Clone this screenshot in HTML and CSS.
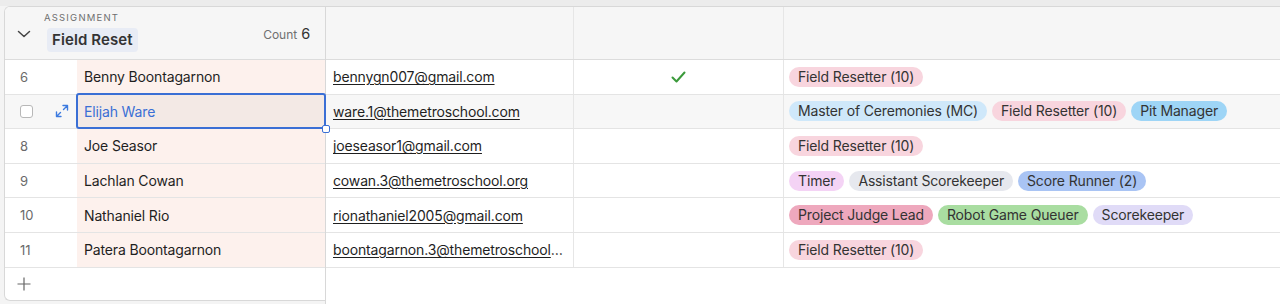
FILE: index.html
```html
<!DOCTYPE html>
<html>
<head>
  <meta charset="UTF-8">
  <title>Assignments</title>
  <link rel="stylesheet" href="styles.css">
</head>
<body>
  <div class="topbar"></div>
  <div class="sheet">
    <div class="frozen">
      <div class="group-head">
        <svg class="chevron" width="14" height="8" viewBox="0 0 14 8"><path d="M1.5 1.5 L7 6.5 L12.5 1.5" fill="none" stroke="#444" stroke-width="1.5" stroke-linecap="round" stroke-linejoin="round"/></svg>
        <div class="group-title">
          <div class="group-label">ASSIGNMENT</div>
          <span class="group-pill">Field Reset</span>
        </div>
        <div class="count"><span class="count-label">Count</span> 6</div>
      </div>

      <div class="frow">
        <div class="num">6</div>
        <div class="name">Benny Boontagarnon</div>
      </div>
      <div class="frow hover">
        <div class="num">
          <span class="checkbox"></span>
          <svg class="expand" width="14" height="14" viewBox="0 0 14 14"><path d="M8 1.5 H12.5 V6 M12.5 1.5 L8.5 5.5 M6 12.5 H1.5 V8 M1.5 12.5 L5.5 8.5" fill="none" stroke="#3d7be0" stroke-width="1.4" stroke-linecap="round" stroke-linejoin="round"/></svg>
        </div>
        <div class="name selected">Elijah Ware<span class="handle"></span></div>
      </div>
      <div class="frow">
        <div class="num">8</div>
        <div class="name">Joe Seasor</div>
      </div>
      <div class="frow">
        <div class="num">9</div>
        <div class="name">Lachlan Cowan</div>
      </div>
      <div class="frow">
        <div class="num">10</div>
        <div class="name">Nathaniel Rio</div>
      </div>
      <div class="frow">
        <div class="num">11</div>
        <div class="name">Patera Boontagarnon</div>
      </div>
      <div class="add-row">
        <svg width="14" height="14" viewBox="0 0 14 14"><path d="M7 0.5 V13.5 M0.5 7 H13.5" stroke="#666" stroke-width="1.2"/></svg>
      </div>
    </div>

    <div class="grid">
      <div class="grid-head">
        <div class="cell email"></div>
        <div class="cell check"></div>
        <div class="cell tags"></div>
      </div>

      <div class="grow">
        <div class="cell email"><a href="#">bennygn007@gmail.com</a></div>
        <div class="cell check">
          <svg width="15" height="12" viewBox="0 0 15 12"><path d="M1.5 6.5 L5.5 10.5 L13.5 1.5" fill="none" stroke="#3b9a3b" stroke-width="2" stroke-linecap="round" stroke-linejoin="round"/></svg>
        </div>
        <div class="cell tags"><span class="tag pink">Field Resetter (10)</span></div>
      </div>
      <div class="grow hover">
        <div class="cell email"><a href="#">ware.1@themetroschool.com</a></div>
        <div class="cell check"></div>
        <div class="cell tags">
          <span class="tag sky">Master of Ceremonies (MC)</span>
          <span class="tag pink">Field Resetter (10)</span>
          <span class="tag blue">Pit Manager</span>
        </div>
      </div>
      <div class="grow">
        <div class="cell email"><a href="#">joeseasor1@gmail.com</a></div>
        <div class="cell check"></div>
        <div class="cell tags"><span class="tag pink">Field Resetter (10)</span></div>
      </div>
      <div class="grow">
        <div class="cell email"><a href="#">cowan.3@themetroschool.org</a></div>
        <div class="cell check"></div>
        <div class="cell tags">
          <span class="tag lilac">Timer</span>
          <span class="tag grey">Assistant Scorekeeper</span>
          <span class="tag cobalt">Score Runner (2)</span>
        </div>
      </div>
      <div class="grow">
        <div class="cell email"><a href="#">rionathaniel2005@gmail.com</a></div>
        <div class="cell check"></div>
        <div class="cell tags">
          <span class="tag rose">Project Judge Lead</span>
          <span class="tag green">Robot Game Queuer</span>
          <span class="tag lavender">Scorekeeper</span>
        </div>
      </div>
      <div class="grow">
        <div class="cell email"><a href="#">boontagarnon.3@themetroschool.org</a></div>
        <div class="cell check"></div>
        <div class="cell tags"><span class="tag pink">Field Resetter (10)</span></div>
      </div>
    </div>
  </div>
</body>
</html>
```

FILE: styles.css
```css
body {
  margin: 0;
  background-color: #f4f4f4;
  font-family: Inter, "Liberation Sans", sans-serif;
  font-size: 14px;
  letter-spacing: -0.15px;
  color: #1f1f1f;
}
.topbar {
  height: 6px;
  background-color: #ececec;
}
.sheet {
  display: flex;
  height: 298px;
}
.frozen {
  width: 320px;
  height: 293px;
  margin-left: 4px;
  background-color: #fff;
  border: 1px solid #d8d8d8;
  border-right: none;
  border-radius: 6px 0 0 6px;
}
.grid {
  flex: 1;
  background-color: #fff;
  border-top: 1px solid #d8d8d8;
  border-left: 1px solid #d8d8d8;
}
.group-head, .grid-head {
  height: 52px;
  background-color: #f6f6f6;
  border-bottom: 1px solid #dcdcdc;
}
.group-head {
  display: flex;
  align-items: center;
  padding: 0 15px 0 12px;
  border-radius: 5px 0 0 0;
}
.chevron {
  margin-right: 13px;
  margin-top: 1px;
}
.group-title {
  flex: 1;
  display: flex;
  flex-direction: column;
  align-items: flex-start;
  gap: 4px;
}
.group-label {
  font-size: 9.5px;
  letter-spacing: 1.2px;
  color: #6f6f6f;
  line-height: 12px;
  margin-top: -2px;
}
.group-pill {
  background-color: #e8ecf5;
  border-radius: 4px;
  padding: 0 5px;
  margin-left: 3px;
  line-height: 24px;
  font-size: 15px;
  letter-spacing: 0.1px;
  font-weight: 600;
  color: #333;
}
.count {
  font-size: 14.5px;
  color: #333;
  margin-top: 1px;
}
.count-label {
  font-size: 12px;
  letter-spacing: 0;
  color: #707070;
}
.frow, .grow {
  display: flex;
  height: 33.6px;
  border-bottom: 1px solid #e4e4e4;
}
.hover {
  background-color: #f7f7f7;
}
.num {
  width: 72px;
  display: flex;
  align-items: center;
  padding-left: 15px;
  box-sizing: border-box;
  font-size: 13px;
  color: #6a6a6a;
}
.checkbox {
  width: 11px;
  height: 11px;
  border: 1px solid #b8b8b8;
  border-radius: 3px;
  background-color: #fff;
}
.expand {
  margin-left: 22px;
}
.name {
  flex: 1;
  display: flex;
  align-items: center;
  padding-left: 7px;
  background-color: #fdf1ed;
}
.name.selected {
  position: relative;
  background-color: #f3e9e5;
  color: #3a6fd5;
}
.name.selected::after {
  content: "";
  position: absolute;
  left: -1px;
  right: -1px;
  top: -2px;
  bottom: -1px;
  border: 2px solid #3a6fd5;
  border-radius: 3px;
}
.handle {
  position: absolute;
  right: -5px;
  bottom: -5px;
  width: 6px;
  height: 6px;
  background-color: #fff;
  border: 1.5px solid #3a6fd5;
  border-radius: 2px;
  z-index: 1;
}
.add-row {
  height: 33px;
  display: flex;
  align-items: center;
  padding-left: 12px;
}
.grid-head {
  display: flex;
}
.cell {
  display: flex;
  align-items: center;
  box-sizing: border-box;
  overflow: hidden;
}
.email {
  width: 248px;
  padding: 0 8px 0 7px;
  border-right: 1px solid #e6e6e6;
}
.email a {
  color: #1f1f1f;
  text-decoration: underline;
  text-underline-offset: 2px;
  white-space: nowrap;
  overflow: hidden;
  text-overflow: ellipsis;
}
.check {
  width: 210px;
  justify-content: center;
  border-right: 1px solid #e6e6e6;
}
.tags {
  flex: 1;
  padding-left: 5px;
  gap: 5px;
}
.tag {
  line-height: 20px;
  padding: 0 9px;
  border-radius: 10px;
  color: #333;
  white-space: nowrap;
}
.pink { background-color: #f8d5de; }
.sky { background-color: #cfe8fa; }
.blue { background-color: #9ed5f6; }
.lilac { background-color: #f4d3f5; }
.grey { background-color: #e6e8ee; }
.cobalt { background-color: #a9c4f4; }
.rose { background-color: #eea8bd; }
.green { background-color: #a9dda1; }
.lavender { background-color: #e0dbf7; }
```
